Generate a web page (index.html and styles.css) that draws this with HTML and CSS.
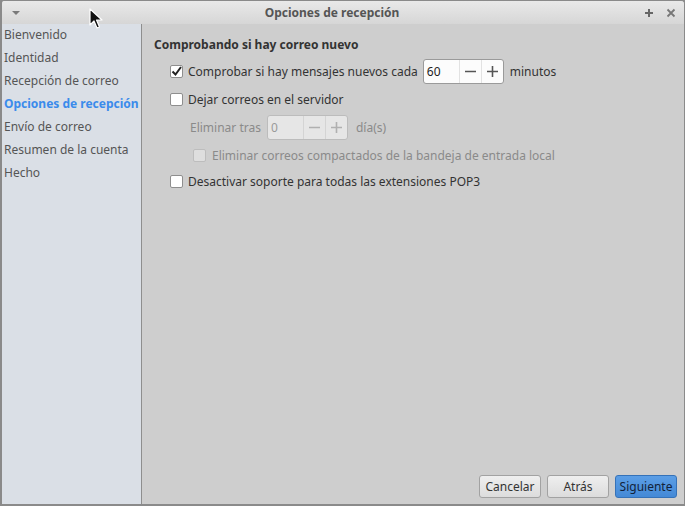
FILE: index.html
```html
<!DOCTYPE html>
<html lang="es">
<head>
<meta charset="utf-8">
<title>Opciones de recepción</title>
<link rel="stylesheet" href="styles.css">
</head>
<body>
<div class="window">
  <div class="titlebar">
    <span class="menu-arrow"></span>
    <span class="title">Opciones de recepción</span>
    <span class="tb-btns">
      <svg class="tb-icon" width="10" height="10" viewBox="0 0 10 10"><path d="M5 1v8M1 5h8" stroke="#666" stroke-width="2"/></svg>
      <svg class="tb-icon" width="10" height="10" viewBox="0 0 10 10"><path d="M1.5 1.5l7 7M8.5 1.5l-7 7" stroke="#777" stroke-width="1.8"/></svg>
    </span>
  </div>
  <div class="main">
    <nav class="sidebar">
      <div class="nav-item">Bienvenido</div>
      <div class="nav-item">Identidad</div>
      <div class="nav-item">Recepción de correo</div>
      <div class="nav-item active">Opciones de recepción</div>
      <div class="nav-item">Envío de correo</div>
      <div class="nav-item">Resumen de la cuenta</div>
      <div class="nav-item">Hecho</div>
    </nav>
    <section class="content">
      <div class="form">
        <h2 class="heading">Comprobando si hay correo nuevo</h2>
        <div class="row lvl1">
          <span class="check checked"><svg width="11" height="11" viewBox="0 0 11 11"><path d="M1.5 5.5l3 3 5.5-7.5" fill="none" stroke="#222" stroke-width="2"/></svg></span>
          <span class="label">Comprobar si hay mensajes nuevos cada</span>
          <span class="spin">
            <span class="spin-val">60</span>
            <span class="spin-btn"><svg width="11" height="11" viewBox="0 0 11 11"><path d="M0 5.5h11" stroke="#555" stroke-width="1.6"/></svg></span>
            <span class="spin-btn"><svg width="11" height="11" viewBox="0 0 11 11"><path d="M0 5.5h11M5.5 0v11" stroke="#555" stroke-width="1.6"/></svg></span>
          </span>
          <span class="label">minutos</span>
        </div>
        <div class="row lvl1">
          <span class="check"></span>
          <span class="label">Dejar correos en el servidor</span>
        </div>
        <div class="row lvl2 disabled">
          <span class="label">Eliminar tras</span>
          <span class="spin off">
            <span class="spin-val">0</span>
            <span class="spin-btn"><svg width="11" height="11" viewBox="0 0 11 11"><path d="M0 5.5h11" stroke="#b0b0b0" stroke-width="1.6"/></svg></span>
            <span class="spin-btn"><svg width="11" height="11" viewBox="0 0 11 11"><path d="M0 5.5h11M5.5 0v11" stroke="#b0b0b0" stroke-width="1.6"/></svg></span>
          </span>
          <span class="label">día(s)</span>
        </div>
        <div class="row lvl3 disabled">
          <span class="check off"></span>
          <span class="label">Eliminar correos compactados de la bandeja de entrada local</span>
        </div>
        <div class="row lvl1 last">
          <span class="check"></span>
          <span class="label">Desactivar soporte para todas las extensiones POP3</span>
        </div>
      </div>
      <div class="buttons">
        <button class="btn">Cancelar</button>
        <button class="btn">Atrás</button>
        <button class="btn primary">Siguiente</button>
      </div>
    </section>
  </div>
  <svg class="cursor" width="14" height="22" viewBox="0 0 14 22"><path d="M1 1v16l4-4 3 7 2.5-1-3-7h5.5z" fill="#111" stroke="#fff" stroke-width="1.2" stroke-linejoin="round"/></svg>
</div>
</body>
</html>
```
FILE: styles.css
```css
* { box-sizing: border-box; }
html, body { margin: 0; padding: 0; }
body {
  width: 685px;
  height: 506px;
  background: #8c8c8c;
  font-family: "Noto Sans", "Open Sans", sans-serif;
  font-size: 12px;
  overflow: hidden;
}
.window {
  position: relative;
  width: 685px;
  height: 506px;
  display: flex;
  flex-direction: column;
  border: 1px solid #8a8a8a;
  border-left-width: 2px;
  border-bottom-width: 2px;
  border-radius: 4px 4px 0 0;
  background: #cecece;
  overflow: hidden;
}
.titlebar {
  height: 23px;
  flex: none;
  display: flex;
  align-items: center;
  padding: 0 8px 0 10px;
  background: linear-gradient(#e9e9e9, #d6d6d6);
  color: #555;
}
.menu-arrow {
  width: 0; height: 0;
  border-left: 4px solid transparent;
  border-right: 4px solid transparent;
  border-top: 4px solid #7a7a7a;
  margin-top: 1px;
}
.title {
  flex: 1;
  text-align: center;
  font-weight: bold;
  font-size: 12px;
}
.tb-btns { display: flex; gap: 12px; align-items: center; }
.tb-icon { display: block; }
.main { flex: 1; display: flex; min-height: 0; }
.sidebar {
  width: 140px;
  flex: none;
  background: #dadfe6;
  border-right: 1px solid #8e8e8e;
}
.nav-item {
  height: 23px;
  line-height: 21px;
  padding-left: 2px;
  color: #555;
  white-space: nowrap;
}
.nav-item.active { color: #3b8beb; font-weight: bold; }
.content {
  flex: 1;
  display: flex;
  flex-direction: column;
  justify-content: space-between;
  padding: 11px 7px 6px 12px;
  color: #333;
}
.heading {
  margin: 0;
  font-size: 12px;
  font-weight: bold;
  height: 22px;
  line-height: 20px;
}
.row {
  height: 28px;
  display: flex;
  align-items: center;
  gap: 4px;
}
.row.last { height: 24px; }
.lvl1 { padding-left: 16px; }
.lvl2 { padding-left: 36px; gap: 4px; }
.lvl2 .spin { margin: 0 4px 0 2px; }
.lvl3 { padding-left: 39px; gap: 5px; }
.row .label { white-space: nowrap; }
.disabled { color: #8a8a8a; }
.check {
  width: 13px; height: 13px;
  background: #fff;
  border: 1px solid #8e8e8e;
  border-radius: 2px;
  display: flex;
  align-items: center;
  justify-content: center;
  margin-right: 1px;
}
.check.off { background: #dedede; border-color: #bdbdbd; }
.spin {
  display: flex;
  height: 25px;
  width: 81px;
  border: 1px solid #9a9a9a;
  border-radius: 3px;
  background: #fcfcfc;
  margin: 0 2px 0 1px;
  color: #222;
}
.spin-val {
  flex: 1;
  padding-left: 3px;
  line-height: 23px;
}
.spin-btn {
  width: 22px;
  border-left: 1px solid #e2e2e2;
  display: flex;
  align-items: center;
  justify-content: center;
}
.spin.off { background: #e6e6e6; border-color: #bcbcbc; color: #9a9a9a; }
.spin.off .spin-btn { border-left-color: #d4d4d4; }
.buttons {
  display: flex;
  justify-content: flex-end;
  gap: 6px;
}
.btn {
  width: 62px;
  height: 23px;
  font: inherit;
  font-size: 12px;
  color: #333;
  border: 1px solid #a2a2a2;
  border-radius: 3px;
  background: linear-gradient(#efefef, #dcdcdc);
  padding: 0;
}
.btn.primary {
  background: linear-gradient(#5b9ee6, #4489d6);
  border-color: #3572b8;
  color: #12233a;
}
.cursor {
  position: absolute;
  left: 87px;
  top: 7px;
}
```
